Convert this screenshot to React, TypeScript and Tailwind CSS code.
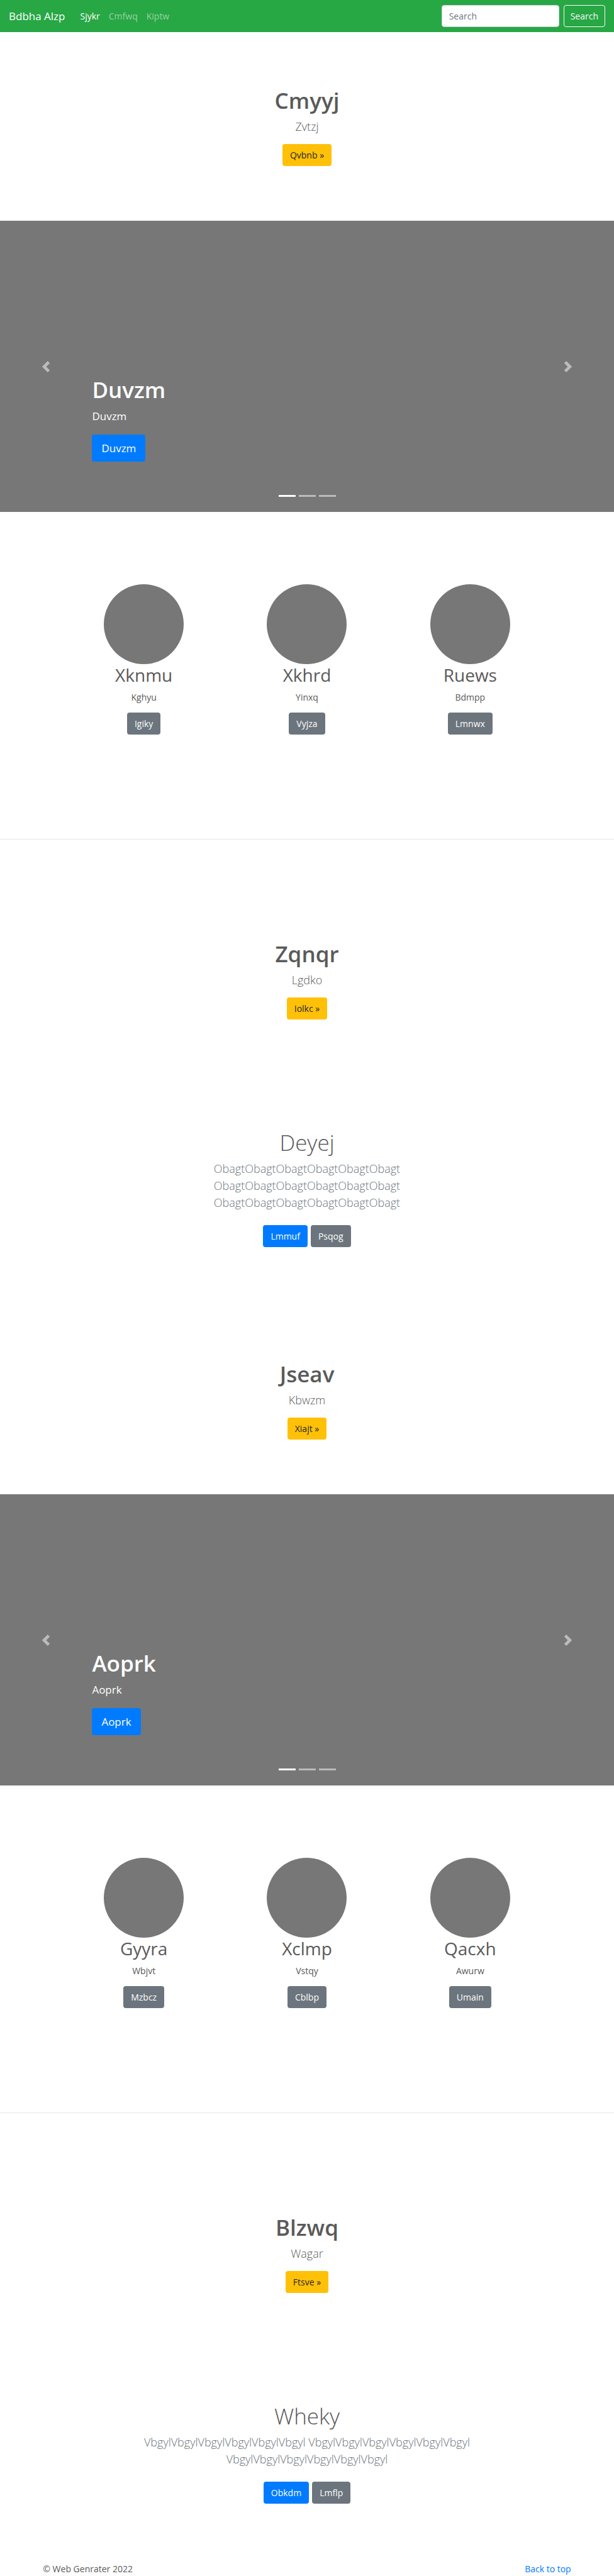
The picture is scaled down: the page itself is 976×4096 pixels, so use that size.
import type { ReactNode } from "react";

type Tone = "warning" | "primary" | "secondary";

const tones: Record<Tone, string> = {
  warning: "bg-[#ffc107] text-[#212529]",
  primary: "bg-[#007bff] text-white",
  secondary: "bg-[#6c757d] text-white",
};

function Button({ tone, children }: { tone: Tone; children: ReactNode }) {
  return (
    <a
      href="#"
      className={`inline-flex h-[35px] items-center justify-center rounded-[4px] px-3 text-[14px] leading-[22px] ${tones[tone]}`}
    >
      {children}
    </a>
  );
}

function Navbar() {
  return (
    <nav className="flex h-[51px] items-center justify-between bg-[#28a745] px-[14px]">
      <div className="flex items-center">
        <a href="#" className="mr-[24px] text-[17px] leading-[27px] text-white">
          Bdbha Alzp
        </a>
        <ul className="flex gap-[14px] text-[14px] leading-[22px] text-white/50">
          <li>
            <a href="#" className="text-white">Sjykr</a>
          </li>
          <li>
            <a href="#">Cmfwq</a>
          </li>
          <li>
            <a href="#">Kiptw</a>
          </li>
        </ul>
      </div>
      <form className="flex gap-[7px]">
        <input
          type="search"
          aria-label="Search"
          placeholder="Search"
          className="h-[35px] w-[187px] rounded-[4px] border border-[#ced4da] bg-white px-[11px] text-[14px] text-[#495057] placeholder:text-[#6c757d]"
        />
        <button
          type="button"
          className="h-[35px] rounded-[4px] border border-[#f8f9fa] px-[10px] text-[14px] leading-[22px] text-[#f8f9fa]"
        >
          Search
        </button>
      </form>
    </nav>
  );
}

function Feature({ title, lead, action }: { title: string; lead: string; action: string }) {
  return (
    <section className="flex flex-col items-center py-[87px] text-center">
      <h2 className="mb-[7px] text-[35px] leading-[43px] font-semibold">{title}</h2>
      <p className="mb-[14px] text-[18px] leading-[27px] font-light">{lead}</p>
      <Button tone="warning">{action} »</Button>
    </section>
  );
}

function Carousel({ title }: { title: string }) {
  return (
    <section className="relative h-[463px] bg-[#777] text-white">
      <div className="flex h-full flex-col items-start justify-end px-[15%] pb-[80px]">
        <h1 className="mb-[7px] text-[35px] leading-[43px] font-semibold">{title}</h1>
        <p className="mb-[16px] text-[17px] leading-[27px]">{title}</p>
        <a
          href="#"
          className="inline-flex h-[43px] items-center rounded-[4px] bg-[#007bff] px-[15px] text-[17px] leading-[27px]"
        >
          {title}
        </a>
      </div>
      <button
        type="button"
        aria-label="Previous"
        className="absolute inset-y-0 left-0 flex w-[15%] items-center justify-center opacity-50"
      >
        <svg className="size-[18px]" viewBox="0 0 8 8" fill="#fff">
          <path d="M5.25 0l-4 4 4 4 1.5-1.5L4.25 4l2.5-2.5L5.25 0z" />
        </svg>
      </button>
      <button
        type="button"
        aria-label="Next"
        className="absolute inset-y-0 right-0 flex w-[15%] items-center justify-center opacity-50"
      >
        <svg className="size-[18px]" viewBox="0 0 8 8" fill="#fff">
          <path d="M2.75 0l-1.5 1.5L3.75 4l-2.5 2.5L2.75 8l4-4-4-4z" />
        </svg>
      </button>
      <div className="absolute inset-x-0 bottom-[24px] flex justify-center gap-[5px]">
        <button type="button" aria-label="Slide 1" className="h-[3px] w-[27px] bg-white" />
        <button type="button" aria-label="Slide 2" className="h-[3px] w-[27px] bg-white/50" />
        <button type="button" aria-label="Slide 3" className="h-[3px] w-[27px] bg-white/50" />
      </div>
    </section>
  );
}

type Item = { title: string; text: string; action: string };

function Columns({ items }: { items: Item[] }) {
  return (
    <section className="mx-auto grid max-w-[778px] grid-cols-3 pt-[115px] pb-[166px]">
      {items.map((item) => (
        <div key={item.title} className="flex flex-col items-center text-center">
          <div className="size-[127px] rounded-full bg-[#777]" />
          <h2 className="mb-[7px] text-[28px] leading-[35px]">{item.title}</h2>
          <p className="mb-[13px] text-[14px] leading-[22px]">{item.text}</p>
          <Button tone="secondary">{item.action}</Button>
        </div>
      ))}
    </section>
  );
}

type AlbumProps = { title: string; text: string; primary: string; secondary: string };

function Album({ title, text, primary, secondary }: AlbumProps) {
  return (
    <section className="mx-auto flex max-w-[560px] flex-col items-center pt-[87px] pb-[93px] text-center">
      <h1 className="mb-[7px] text-[35px] leading-[43px] font-light">{title}</h1>
      <p className="mb-[22px] text-[18px] leading-[27px] font-light text-[#6c757d]">{text}</p>
      <div className="flex gap-[5px]">
        <Button tone="primary">{primary}</Button>
        <Button tone="secondary">{secondary}</Button>
      </div>
    </section>
  );
}

function Divider() {
  return <hr className="mb-[73px] border-t border-[#e5e5e5]" />;
}

const firstItems: Item[] = [
  { title: "Xknmu", text: "Kghyu", action: "Igiky" },
  { title: "Xkhrd", text: "Yinxq", action: "Vyjza" },
  { title: "Ruews", text: "Bdmpp", action: "Lmnwx" },
];

const secondItems: Item[] = [
  { title: "Gyyra", text: "Wbjvt", action: "Mzbcz" },
  { title: "Xclmp", text: "Vstqy", action: "Cblbp" },
  { title: "Qacxh", text: "Awurw", action: "Umain" },
];

export default function App() {
  return (
    <div className="bg-white font-['Open_Sans','Noto_Sans',sans-serif] text-[#5a5a5a]">
      <Navbar />
      <main>
        <Feature title="Cmyyj" lead="Zvtzj" action="Qvbnb" />
        <Carousel title="Duvzm" />
        <Columns items={firstItems} />
        <Divider />
        <Feature title="Zqnqr" lead="Lgdko" action="Iolkc" />
        <Album
          title="Deyej"
          text="ObagtObagtObagtObagtObagtObagt ObagtObagtObagtObagtObagtObagt ObagtObagtObagtObagtObagtObagt"
          primary="Lmmuf"
          secondary="Psqog"
        />
        <Feature title="Jseav" lead="Kbwzm" action="Xiajt" />
        <Carousel title="Aoprk" />
        <Columns items={secondItems} />
        <Divider />
        <Feature title="Blzwq" lead="Wagar" action="Ftsve" />
        <Album
          title="Wheky"
          text="VbgylVbgylVbgylVbgylVbgylVbgyl VbgylVbgylVbgylVbgylVbgylVbgyl VbgylVbgylVbgylVbgylVbgylVbgyl"
          primary="Obkdm"
          secondary="Lmflp"
        />
      </main>
      <footer className="flex justify-between px-[7%] text-[14px] leading-[22px]">
        <p>© Web Genrater 2022</p>
        <a href="#" className="text-[#007bff]">Back to top</a>
      </footer>
    </div>
  );
}
